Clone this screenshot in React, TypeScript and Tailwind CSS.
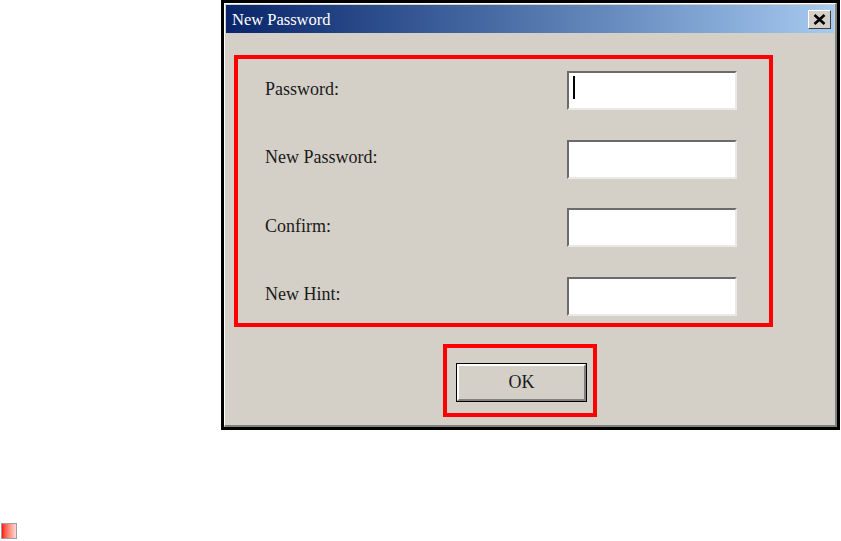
const fields = ['Password:', 'New Password:', 'Confirm:', 'New Hint:'];

const TextBox = ({ focused }: { focused?: boolean }) => (
    <div className="relative w-[170px] h-[39px] bg-white border-2 border-t-[#6b6b6b] border-l-[#6b6b6b] border-b-[#ebe9e5] border-r-[#ebe9e5]">
        {focused && <div className="absolute left-[4px] top-[3px] w-[2px] h-[23px] bg-black" />}
    </div>
);

const App = () => {
    return (
        <div className="w-[841px] h-[541px] bg-white overflow-hidden font-['Liberation_Serif',serif]">
            {/* Dialog */}
            <div className="ml-[221px] w-[619px] h-[430px] border-[3px] border-black bg-[#d4d0c8]">
                <div className="h-full p-[1px] border-t border-l border-white border-r-2 border-b-2 border-r-[#808080] border-b-[#808080]">
                    {/* Title bar */}
                    <div className="h-[28px] flex items-center justify-between bg-gradient-to-r from-[#0a246a] to-[#a6caf0]">
                        <span className="pl-[6px] pt-[3px] text-white text-[16.5px] leading-none">New Password</span>
                        <div className="mr-[3px] w-[23px] h-[19px] bg-[#d4d0c8] border border-t-white border-l-white border-b-[#404040] border-r-[#404040] flex items-center justify-center">
                            <svg width="13" height="11" viewBox="0 0 13 11">
                                <path d="M1.5 1 L11.5 10 M11.5 1 L1.5 10" stroke="#000" strokeWidth="2.6" />
                            </svg>
                        </div>
                    </div>

                    {/* Fields */}
                    <div className="mt-[22px] ml-[8px] w-[539px] h-[272px] border-4 border-[#ff0000] pt-[12px] pl-[27px] flex flex-col gap-[29.5px]">
                        {fields.map((f, i) => (
                            <div key={f} className="flex items-center h-[39px]">
                                <span className="w-[302px] pb-[4px] text-[18px] text-[#1a1a1a] leading-none">{f}</span>
                                <TextBox focused={i === 0} />
                            </div>
                        ))}
                    </div>

                    {/* OK */}
                    <div className="mt-[17px] ml-[217px] w-[154px] h-[73px] border-4 border-[#ff0000] pt-[15px] pl-[9px]">
                        <div className="w-[131px] h-[39px] border border-black">
                            <div className="h-full border-2 border-t-white border-l-white border-b-[#808080] border-r-[#808080] flex items-center justify-center text-[18px] text-[#1a1a1a]">
                                OK
                            </div>
                        </div>
                    </div>
                </div>
            </div>

            {/* Bullet */}
            <div className="mt-[93px] ml-[1px] w-[16px] h-[16px] border border-[#a0a0a0] bg-gradient-to-r from-[#ff0000] to-[#ffd6d6]" />
        </div>
    );
};

export default App;
